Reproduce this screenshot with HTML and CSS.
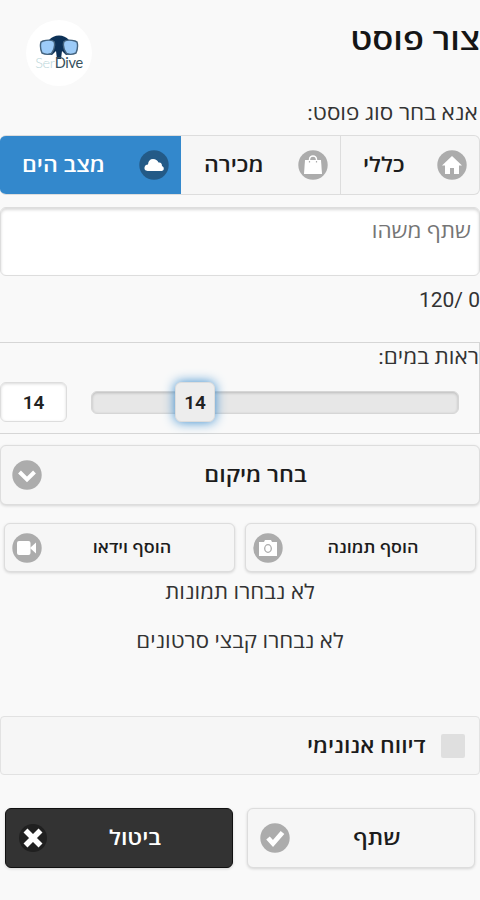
FILE: index.html
```html
<!DOCTYPE html>
<html lang="he" dir="rtl">
<head>
<meta charset="utf-8">
<title>צור פוסט</title>
<link rel="stylesheet" href="styles.css">
</head>
<body>
<main class="page">
  <header class="header">
    <h1 class="title">צור פוסט</h1>
    <div class="logo">
      <svg class="logo-mask" viewBox="0 0 40 24">
        <path d="M10 5Q14 .5 20 .5T30 5L36 7 37 18 27 20 23 16 22 24H18L17 16 13 20 3 18 4 7Z" fill="#0d3157"/>
        <path d="M4 6Q11 4 15 6.500Q17 12 12.500 18.500Q8 20.500 3 18Q.5 12 2 7Z" fill="#9ccbf8" stroke="#45647f" stroke-width="1.400"/>
        <path d="M36 6Q29 4 25 6.500Q23 12 27.500 18.500Q32 20.500 37 18Q39.500 12 38 7Z" fill="#9ccbf8" stroke="#45647f" stroke-width="1.400"/>
      </svg>
      <div class="logo-name" dir="ltr"><span class="logo-light">Ser</span>Dive</div>
    </div>
  </header>

  <p class="prompt">אנא בחר סוג פוסט:</p>
  <nav class="tabs">
    <div class="tab tab-general">
      <svg class="icon" viewBox="0 0 30 30"><circle cx="15" cy="15" r="14.700" fill="#acacac"/><path d="M15 6 25 15.500H22V24H17V18H13V24H8V15.500H5Z" fill="#fff"/></svg>
      <span class="label">כללי</span>
    </div>
    <div class="tab tab-sale">
      <svg class="icon" viewBox="0 0 30 30"><circle cx="15" cy="15" r="14.700" fill="#acacac"/><path d="M7 10H23L24 24H6Z" fill="#fff"/><path d="M11.500 13V9Q12 6 15 6T18.500 9V13" fill="none" stroke="#fff" stroke-width="1.400"/><path d="M11.500 11v1.500M18.500 11v1.500" stroke="#acacac" stroke-width="1.200"/></svg>
      <span class="label">מכירה</span>
    </div>
    <div class="tab tab-sea">
      <svg class="icon" viewBox="0 0 30 30"><circle cx="15" cy="15" r="14.700" fill="#235a87"/><path d="M8.500 21Q5 20.500 5.500 17.500T9 14.500Q9.500 9 14 9Q18 9 19.500 12.500Q23 12 23 16Q25.500 17 24.500 20L23 21Z" fill="#fff"/></svg>
      <span class="label">מצב הים</span>
    </div>
  </nav>

  <div class="textbox"><p class="placeholder">שתף משהו</p></div>
  <p class="counter">0 /120</p>

  <section class="visibility">
    <p class="slider-label">ראות במים:</p>
    <div class="slider-row">
      <div class="track"><div class="handle">14</div></div>
      <div class="value">14</div>
    </div>
  </section>

  <div class="button select">
    <span class="label">בחר מיקום</span>
    <svg class="icon" viewBox="0 0 30 30"><circle cx="15" cy="15" r="14.700" fill="#acacac"/><path d="M7.500 12 15 19.500 22.500 12" fill="none" stroke="#fff" stroke-width="4"/></svg>
  </div>

  <div class="pair media">
    <div class="button small">
      <span class="label">הוסף תמונה</span>
      <svg class="icon" viewBox="0 0 30 30"><circle cx="15" cy="15" r="14.700" fill="#acacac"/><path d="M6 9H11L12 7H18L19 9H24V23H6Z" fill="#fff"/><ellipse cx="15" cy="15.500" rx="3.300" ry="3.800" fill="none" stroke="#acacac" stroke-width="1.300"/></svg>
    </div>
    <div class="button small">
      <span class="label">הוסף וידאו</span>
      <svg class="icon" viewBox="0 0 30 30"><circle cx="15" cy="15" r="14.700" fill="#acacac"/><rect x="5" y="8" width="13.500" height="14" rx="2" fill="#fff"/><path d="M18 15 24 9.500V20.500Z" fill="#fff"/></svg>
    </div>
  </div>
  <p class="status">לא נבחרו תמונות</p>
  <p class="status status-video">לא נבחרו קבצי סרטונים</p>

  <div class="anonymous">
    <span class="checkbox"></span>
    <span class="label">דיווח אנונימי</span>
  </div>

  <div class="pair actions">
    <div class="button">
      <span class="label">שתף</span>
      <svg class="icon" viewBox="0 0 30 30"><circle cx="15" cy="15" r="14.700" fill="#acacac"/><path d="M8 15 13 20.500 22.500 9.500" fill="none" stroke="#fff" stroke-width="4.800"/></svg>
    </div>
    <div class="button cancel">
      <span class="label">ביטול</span>
      <svg class="icon" viewBox="0 0 30 30"><circle cx="15" cy="15" r="14" fill="#202020"/><path d="M7.500 7.500 22.500 22.500M22.500 7.500 7.500 22.500" stroke="#fff" stroke-width="5.600"/></svg>
    </div>
  </div>
</main>
</body>
</html>
```
FILE: styles.css
```css
* { box-sizing: border-box; }
body {
  margin: 0;
  background: #f9f9f9;
  color: #333;
  font-family: Roboto, "Open Sans", sans-serif;
  font-size: 20px;
}
p, h1 { margin: 0; }
.page {
  width: 480px;
  height: 900px;
  overflow: hidden;
  display: flex;
  flex-direction: column;
}
.header {
  height: 98px;
  flex: none;
  display: flex;
  justify-content: space-between;
  padding: 20px 0 0 26px;
}
.title {
  font-size: 29px;
  line-height: 40px;
  font-weight: 600;
  color: #151515;
  transform: scaleX(1.19);
  transform-origin: right;
}
.logo {
  width: 66px;
  height: 66px;
  border-radius: 50%;
  background: #fff;
  display: flex;
  flex-direction: column;
  align-items: center;
  padding-top: 15px;
}
.logo-mask { width: 40px; height: 24px; flex: none; }
.logo-name {
  font-family: Lato, sans-serif;
  font-size: 14.5px;
  line-height: 16px;
  margin-top: -4px;
  color: #36505c;
  letter-spacing: -.3px;
}
.logo-light { color: #b9d5d9; font-weight: 300; }
.prompt, .slider-label, .placeholder { transform: scaleX(1.125); transform-origin: right; }
.prompt { line-height: 30px; height: 37px; padding-right: 2px; flex: none; }
.tabs {
  height: 60px;
  flex: none;
  display: flex;
  border: 1px solid #ddd;
  border-left: 0;
  border-radius: 6px;
  overflow: hidden;
  background: #f6f6f6;
}
.tab {
  display: flex;
  align-items: center;
  justify-content: space-between;
  padding: 0 12px 0 22px;
  color: #1c1c1c;
}
.tab .label { transform: scaleX(1.155); transform-origin: left; }
.tab-general { width: 139px; border-left: 1px solid #ddd; }
.tab-sale { width: 159px; padding-left: 23px; }
.tab-sea { flex: 1; background: #3388cc; color: #fff; margin: -1px 0; }
.label { font-weight: 600; line-height: 30px; white-space: nowrap; }
.icon { width: 30px; height: 30px; flex: none; }
.textbox {
  margin-top: 12px;
  height: 69px;
  flex: none;
  border: 1px solid #ddd;
  border-radius: 6px;
  background: #fff;
  box-shadow: inset 0 2px 3px rgba(0, 0, 0, .15);
  color: #757575;
  padding: 8px 8px;
  line-height: 30px;
}
.counter { line-height: 30px; height: 66px; padding-top: 9px; font-size: 21px; flex: none; }
.visibility {
  height: 92px;
  flex: none;
  border: solid #d6d6d6;
  border-width: 1px 1px 1px 0;
}
.slider-label { line-height: 28px; height: 39px; }
.slider-row { display: flex; align-items: center; height: 40px; padding-right: 20px; }
.track {
  width: 368px;
  height: 23px;
  border: 1px solid #d6d6d6;
  border-radius: 6px;
  background: #e7e7e7;
  box-shadow: inset 0 1px 3px rgba(0, 0, 0, .2);
  display: flex;
  align-items: center;
  padding-right: 243px;
}
.handle, .value {
  height: 40px;
  border: 1px solid #ddd;
  border-radius: 6px;
  font-size: 19px;
  font-weight: 600;
  color: #222;
  display: flex;
  align-items: center;
  justify-content: center;
  flex: none;
}
.handle {
  width: 40px;
  background: #ededed;
  box-shadow: 0 0 12px #3388cc;
}
.value {
  width: 67px;
  margin-right: 24px;
  background: #fff;
  box-shadow: inset 0 1px 3px rgba(0, 0, 0, .15);
}
.button {
  height: 60px;
  display: flex;
  align-items: center;
  border: 1px solid #ddd;
  border-radius: 6px;
  background: #f6f6f6;
  box-shadow: 0 1px 3px rgba(0, 0, 0, .15);
  color: #1c1c1c;
  padding-left: 12px;
}
.button .label { flex: 1; text-align: center; transform: scaleX(1.16); }
.select { margin-top: 11px; flex: none; padding-right: 10px; padding-left: 11px; }
.pair { display: flex; flex: none; }
.pair .button { flex: 1; }
.media { gap: 10px; padding: 0 4px; margin-top: 18px; }
.button.small { height: 49px; padding: 0 12px 0 7px; font-size: 16px; }
.button.small .label { transform: scaleX(1.12); }
.status { text-align: center; line-height: 30px; margin-top: 5px; flex: none; transform: scaleX(1.11); }
.status-video { margin-top: 19px; }
.anonymous {
  margin-top: 60px;
  height: 59px;
  flex: none;
  display: flex;
  align-items: center;
  gap: 15px;
  padding-right: 14px;
  border: 1px solid #e2e2e2;
  border-radius: 4px;
  background: #f6f6f6;
  color: #1c1c1c;
}
.anonymous .label { transform: scaleX(1.145); transform-origin: right; }
.checkbox { width: 24px; height: 24px; background: #dfdfdf; border-radius: 2px; }
.actions { gap: 14px; padding: 0 5px; margin-top: 33px; }
.actions .button { padding-right: 10px; }
.button.cancel { background: #333; border-color: #111; color: #fff; }
```
